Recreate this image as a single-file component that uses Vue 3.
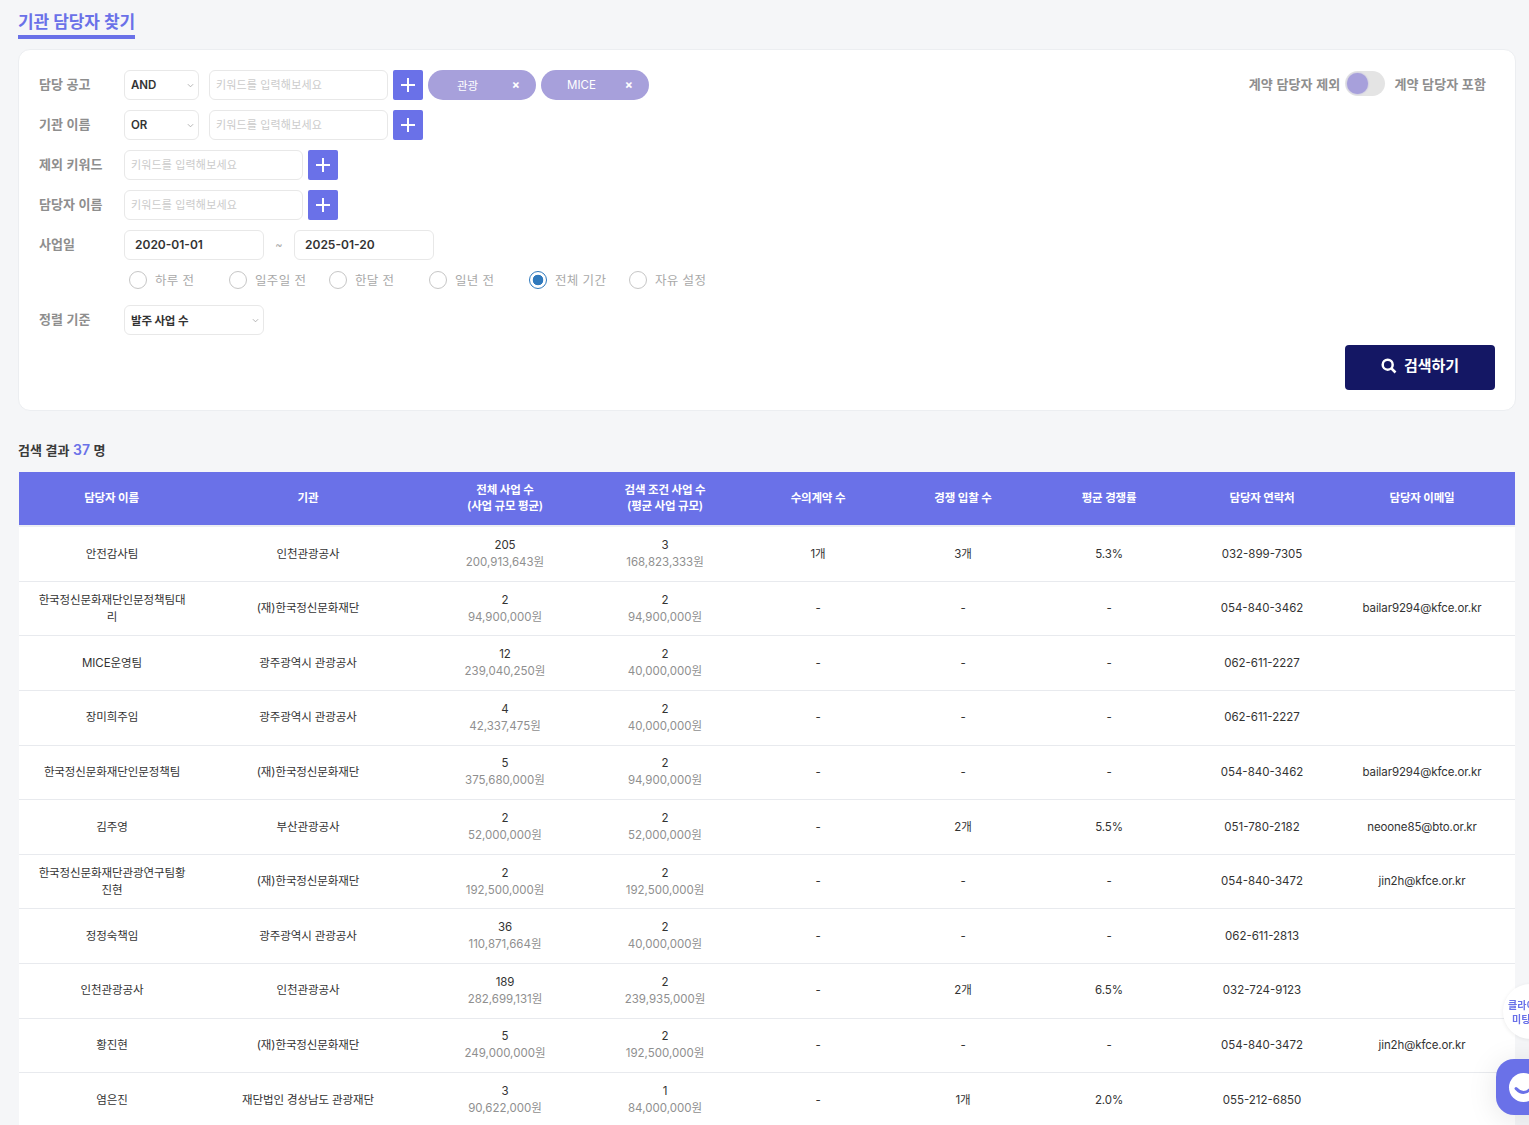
<script setup>
const periods = [
  { label: '하루 전' }, { label: '일주일 전' }, { label: '한달 전' },
  { label: '일년 전' }, { label: '전체 기간', on: true }, { label: '자유 설정' }
]
const cols = [184, 210, 184, 136, 170, 120, 172, 134, 186]
const heads = [['담당자 이름'], ['기관'], ['전체 사업 수', '(사업 규모 평균)'], ['검색 조건 사업 수', '(평균 사업 규모)'], ['수의계약 수'], ['경쟁 입찰 수'], ['평균 경쟁률'], ['담당자 연락처'], ['담당자 이메일']]
const rows = [
  ['안전감사팀', '인천관광공사', '205', '200,913,643원', '3', '168,823,333원', '1개', '3개', '5.3%', '032-899-7305', ''],
  ['한국정신문화재단인문정책팀대리', '(재)한국정신문화재단', '2', '94,900,000원', '2', '94,900,000원', '-', '-', '-', '054-840-3462', 'bailar9294@kfce.or.kr'],
  ['MICE운영팀', '광주광역시 관광공사', '12', '239,040,250원', '2', '40,000,000원', '-', '-', '-', '062-611-2227', ''],
  ['장미희주임', '광주광역시 관광공사', '4', '42,337,475원', '2', '40,000,000원', '-', '-', '-', '062-611-2227', ''],
  ['한국정신문화재단인문정책팀', '(재)한국정신문화재단', '5', '375,680,000원', '2', '94,900,000원', '-', '-', '-', '054-840-3462', 'bailar9294@kfce.or.kr'],
  ['김주영', '부산관광공사', '2', '52,000,000원', '2', '52,000,000원', '-', '2개', '5.5%', '051-780-2182', 'neoone85@bto.or.kr'],
  ['한국정신문화재단관광연구팀황진현', '(재)한국정신문화재단', '2', '192,500,000원', '2', '192,500,000원', '-', '-', '-', '054-840-3472', 'jin2h@kfce.or.kr'],
  ['정정숙책임', '광주광역시 관광공사', '36', '110,871,664원', '2', '40,000,000원', '-', '-', '-', '062-611-2813', ''],
  ['인천관광공사', '인천관광공사', '189', '282,699,131원', '2', '239,935,000원', '-', '2개', '6.5%', '032-724-9123', ''],
  ['황진현', '(재)한국정신문화재단', '5', '249,000,000원', '2', '192,500,000원', '-', '-', '-', '054-840-3472', 'jin2h@kfce.or.kr'],
  ['염은진', '재단법인 경상남도 관광재단', '3', '90,622,000원', '1', '84,000,000원', '-', '1개', '2.0%', '055-212-6850', '']
]
</script>

<template>
  <main class="page">
    <h1 class="title"><span>기관 담당자 찾기</span></h1>

    <section class="card">
      <div class="row">
        <label class="label">담당 공고</label>
        <div class="select small">AND<svg viewBox="0 0 8 5"><path d="M1 1l3 3 3-3" /></svg></div>
        <input class="input gap" placeholder="키워드를 입력해보세요" />
        <button class="plus"><svg viewBox="0 0 14 14"><path d="M7 0v14M0 7h14" /></svg></button>
        <span class="chip"><span>관광</span><b>×</b></span>
        <span class="chip"><span>MICE</span><b>×</b></span>
        <div class="toggle-wrap">
          <span>계약 담당자 제외</span>
          <span class="track"><span class="thumb"></span></span>
          <span class="right">계약 담당자 포함</span>
        </div>
      </div>
      <div class="row">
        <label class="label">기관 이름</label>
        <div class="select small">OR<svg viewBox="0 0 8 5"><path d="M1 1l3 3 3-3" /></svg></div>
        <input class="input gap" placeholder="키워드를 입력해보세요" />
        <button class="plus"><svg viewBox="0 0 14 14"><path d="M7 0v14M0 7h14" /></svg></button>
      </div>
      <div class="row">
        <label class="label">제외 키워드</label>
        <input class="input" placeholder="키워드를 입력해보세요" />
        <button class="plus"><svg viewBox="0 0 14 14"><path d="M7 0v14M0 7h14" /></svg></button>
      </div>
      <div class="row">
        <label class="label">담당자 이름</label>
        <input class="input" placeholder="키워드를 입력해보세요" />
        <button class="plus"><svg viewBox="0 0 14 14"><path d="M7 0v14M0 7h14" /></svg></button>
      </div>
      <div class="row">
        <label class="label">사업일</label>
        <div class="date">2020-01-01</div>
        <span class="tilde">~</span>
        <div class="date">2025-01-20</div>
      </div>
      <div class="radios">
        <span v-for="p in periods" :key="p.label" class="radio-item" :class="{ on: p.on }">
          <i class="radio"></i><span class="radio-text">{{ p.label }}</span>
        </span>
      </div>
      <div class="row sort">
        <label class="label">정렬 기준</label>
        <div class="select wide">발주 사업 수<svg viewBox="0 0 8 5"><path d="M1 1l3 3 3-3" /></svg></div>
      </div>
      <button class="search">
        <svg viewBox="0 0 16 16"><circle cx="6.7" cy="6.7" r="5" /><path d="M10.5 10.5L14.5 14.5" /></svg>
        <span class="search-text">검색하기</span>
      </button>
    </section>

    <p class="result">검색 결과 <em>37</em> 명</p>

    <table class="table">
      <colgroup><col v-for="(c, i) in cols" :key="i" :style="{ width: c + 'px' }" /></colgroup>
      <thead>
        <tr>
          <th v-for="(h, i) in heads" :key="i"><div v-for="l in h" :key="l">{{ l }}</div></th>
        </tr>
      </thead>
      <tbody>
        <tr v-for="(r, i) in rows" :key="i">
          <td class="name">{{ r[0] }}</td>
          <td>{{ r[1] }}</td>
          <td>{{ r[2] }}<div class="sub">{{ r[3] }}</div></td>
          <td>{{ r[4] }}<div class="sub">{{ r[5] }}</div></td>
          <td>{{ r[6] }}</td>
          <td>{{ r[7] }}</td>
          <td>{{ r[8] }}</td>
          <td class="phone">{{ r[9] }}</td>
          <td>{{ r[10] }}</td>
        </tr>
      </tbody>
    </table>

    <div class="bubble"><div>클라이언트</div><div class="second">미팅</div></div>
    <div class="chat">
      <svg viewBox="0 0 56 56"><circle cx="27.5" cy="28.5" r="14.5" fill="#fff" /><path d="M20 29.5Q27 37 34 30.5" fill="none" stroke="#6a71e8" stroke-width="3" stroke-linecap="round" /></svg>
    </div>
  </main>
</template>

<style>
html, body { margin: 0; background: #f5f6f8; overflow: hidden; }
</style>

<style scoped>
.page {
  box-sizing: border-box;
  width: 1529px;
  height: 1125px;
  padding: 10px 13px 0 18px;
  overflow: hidden;
  font-family: Inter, "Noto Sans CJK KR", sans-serif;
  color: #333;
  background: #f5f6f8;
}
.title { margin: 0 0 10px; font-size: 17px; line-height: 25px; font-weight: 600; color: #6a71e8; letter-spacing: -0.1px; }
.title span { display: inline-block; border-bottom: 4px solid #6a71e8; }
.card {
  box-sizing: border-box;
  height: 362px;
  padding: 20px;
  display: flex;
  flex-direction: column;
  gap: 10px;
  background: #fff;
  border: 1px solid #eceef1;
  border-radius: 12px;
}
.row { display: flex; align-items: center; height: 30px; }
.label { width: 85px; font-size: 13px; font-weight: 600; color: #8e8e8e; margin-top: -4px; letter-spacing: 0.1px; }
.select {
  position: relative;
  box-sizing: border-box;
  height: 30px;
  padding-left: 6px;
  display: flex;
  align-items: center;
  border: 1px solid #e8e8e8;
  border-radius: 6px;
  font-size: 11.5px;
  font-weight: 600;
  color: #333;
}
.select svg { position: absolute; right: 4px; top: 12px; width: 7px; height: 5px; fill: none; stroke: #aaa; stroke-width: 1; }
.small { width: 75px; }
.wide { width: 140px; padding-bottom: 1px; letter-spacing: -0.2px; }
.input {
  box-sizing: border-box;
  width: 179px;
  height: 30px;
  padding: 0 6px;
  border: 1px solid #e8e8e8;
  border-radius: 6px;
  outline: none;
  font: 400 11px Inter, "Noto Sans CJK KR", sans-serif;
  letter-spacing: 0.15px;
}
.input::placeholder { color: #cbcbcb; }
.gap { margin-left: 10px; }
.plus {
  width: 30px;
  height: 30px;
  margin-left: 5px;
  padding: 0;
  border: 0;
  border-radius: 2px;
  background: #6a71e8;
  display: flex;
  align-items: center;
  justify-content: center;
}
.plus svg { width: 14px; height: 14px; fill: none; stroke: #fff; stroke-width: 2; }
.chip {
  box-sizing: border-box;
  width: 108px;
  height: 30px;
  margin-left: 5px;
  padding: 0 16px 0 29px;
  border-radius: 15px;
  background: #a7a0db;
  color: #fff;
  font-size: 11.5px;
  display: flex;
  align-items: center;
  justify-content: space-between;
}
.chip b { font-size: 12px; font-weight: 700; line-height: 1; }
.chip + .chip { padding-left: 26px; }
.toggle-wrap {
  margin-left: auto;
  margin-right: 9px;
  margin-top: -4px;
  display: flex;
  align-items: center;
  font-size: 13px;
  font-weight: 600;
  letter-spacing: 0.15px;
  color: #8e8e8e;
}
.track {
  position: relative;
  width: 40px;
  height: 25px;
  margin: 0 9px 0 5px;
  border-radius: 13px;
  background: #e4e4e4;
}
.thumb {
  position: absolute;
  left: 2px;
  top: 2px;
  width: 21px;
  height: 21px;
  border-radius: 50%;
  background: #a7a0db;
  box-shadow: 0 0 2px #a7a0db;
}
.date {
  box-sizing: border-box;
  width: 140px;
  height: 30px;
  padding: 0 0 1px 10px;
  display: flex;
  align-items: center;
  border: 1px solid #e8e8e8;
  border-radius: 6px;
  font-size: 12px;
  font-weight: 600;
}
.tilde { width: 30px; text-align: center; font-size: 11px; color: #aaa; }
.radios { display: flex; padding-left: 90px; height: 20px; }
.radio-item {
  width: 100px;
  display: flex;
  align-items: center;
  gap: 8px;
  font-size: 12.5px;
  color: #a9a9a9;
  letter-spacing: 0.35px;
}
.radio-text { margin-top: -2px; }
.radio {
  box-sizing: border-box;
  width: 18px;
  height: 18px;
  border: 1px solid #c6c6c6;
  border-radius: 50%;
}
.on .radio { border-color: #2f79bd; background: radial-gradient(circle, #2f79bd 0 5px, #fff 5.6px); }
.sort { margin-top: 5px; }
.search {
  align-self: flex-end;
  box-sizing: border-box;
  width: 150px;
  height: 45px;
  padding: 0 0 3px;
  display: flex;
  align-items: center;
  justify-content: center;
  gap: 7px;
  border: 0;
  border-radius: 4px;
  background: #141764;
  color: #fff;
  font: 600 15px Inter, "Noto Sans CJK KR", sans-serif;
}
.search-text { margin-top: -3px; }
.search svg { width: 16px; height: 16px; fill: none; stroke: #fff; stroke-width: 2.5; }
.result { margin: 30px 0 13px; font-size: 13px; line-height: 18px; font-weight: 600; letter-spacing: 0.1px; color: #3a3a3a; }
.result em { font-style: normal; font-size: 14px; color: #6a71e8; }
.table {
  width: 1496px;
  margin-left: 1px;
  table-layout: fixed;
  border-collapse: separate;
  border-spacing: 0;
  background: #fff;
  font-size: 11.5px;
  line-height: 17px;
  text-align: center;
}
th {
  box-sizing: border-box;
  height: 55.3px;
  padding: 0 0 2px;
  background: #6a71e8;
  border-bottom: 2px solid #eceef2;
  color: #fff;
  font-size: 11.5px;
  line-height: 16px;
  font-weight: 600;
  letter-spacing: -0.2px;
}
th:first-child { padding-left: 1px; }
td { height: 54.6px; padding: 0; border-bottom: 1px solid #e8eaee; box-sizing: border-box; letter-spacing: -0.1px; }
td.name { padding: 0 17px 0 19px; word-break: break-all; }
td.phone { letter-spacing: 0; }
.sub { color: #8f8f8f; letter-spacing: 0; }
.bubble {
  position: fixed;
  left: 1503px;
  top: 984px;
  width: 55px;
  height: 55px;
  padding-left: 5px;
  box-sizing: border-box;
  border-radius: 50%;
  background: #fff;
  box-shadow: 0 1px 4px rgba(0,0,0,.08);
  color: #6a71e8;
  font-size: 10px;
  font-weight: 700;
  line-height: 14px;
  white-space: nowrap;
  display: flex;
  flex-direction: column;
  justify-content: center;
}
.second { padding-left: 4px; }
.chat {
  position: fixed;
  left: 1496px;
  top: 1059px;
  width: 56px;
  height: 56px;
  border-radius: 18px;
  background: #6a71e8;
  box-shadow: 0 4px 30px rgba(0,0,0,.1);
  overflow: hidden;
}
.chat svg { display: block; width: 56px; height: 56px; }
</style>
